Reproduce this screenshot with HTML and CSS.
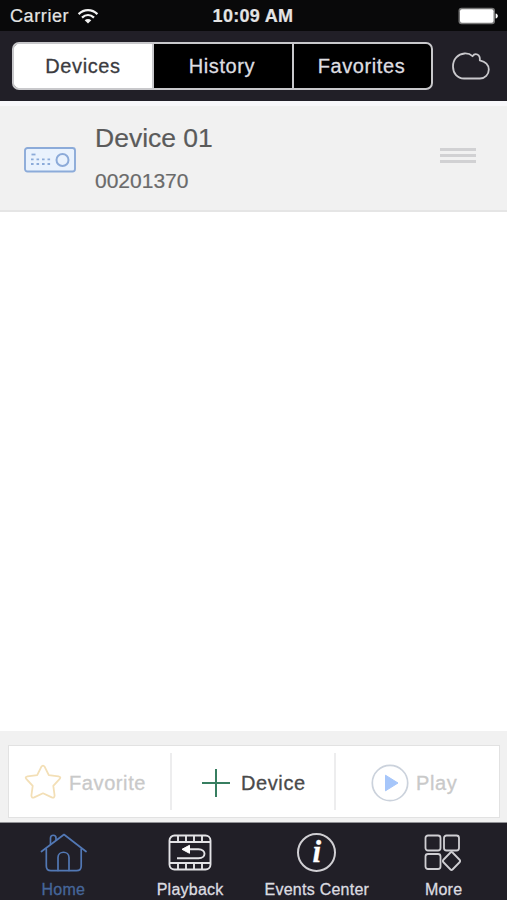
FILE: index.html
```html
<!DOCTYPE html>
<html lang="en">

<head>
    <meta charset="UTF-8">
    <meta name="viewport" content="width=device-width, initial-scale=1.0">
    <title>Devices</title>
    <link rel="stylesheet" href="styles.css">
</head>

<body>
<div class="app">
    <div class="status-bar">
        <div class="carrier">
            <span>Carrier</span>
            <svg width="22" height="17" viewBox="0 0 22 17" fill="none" stroke="#f2f2f2" stroke-width="2.3">
                <path d="M1.6 6.1C7 .9 15 .9 20.4 6.1M5 9.6c3.6-3.4 8.4-3.4 12 0"/>
                <path d="M11 15.6l-3.3-3.3c1.9-1.8 4.7-1.8 6.6 0z" fill="#f2f2f2" stroke="none"/>
            </svg>
        </div>
        <div class="clock">10:09 AM</div>
        <div class="battery">
            <svg width="41" height="18" viewBox="0 0 41 18">
                <rect x=".5" y=".8" width="36.5" height="16.4" rx="3" fill="#777"/>
                <rect x="2" y="2.3" width="33.5" height="13.4" rx="2" fill="#fff"/>
                <path d="M37.6 6.5c3 .6 3 4.4 0 5z" fill="#fff"/>
            </svg>
        </div>
    </div>

    <div class="header">
        <div class="segments">
            <div class="segment active">Devices</div>
            <div class="segment">History</div>
            <div class="segment">Favorites</div>
        </div>
        <svg class="cloud" width="40" height="30" viewBox="0 0 40 30" fill="none" stroke="#c9c8cc" stroke-width="1.8" stroke-linejoin="round">
            <path d="M13 27.500C6.500 27.500 2 22.500 2 15.500C2 8 7 3 13.500 2.500C16.500 2.300 19.500 3.300 21.500 5.200C24 1.500 29.500 3 28.800 9.300C34 10.500 37.800 13.500 37.800 18.500C37.800 23.500 34 27.500 29 27.500Z"/>
        </svg>
    </div>

    <div class="device-row">
        <svg class="device-icon" width="52" height="26" viewBox="0 0 52 26" fill="none" stroke="#8cabd9">
            <rect x="1" y="1" width="50" height="23.500" rx="2.500" fill="#e9f2fd" stroke-width="1.900"/>
            <circle cx="38.500" cy="13" r="6" stroke-width="2"/>
            <path d="M7.500 7.500h4" stroke-width="1.800"/>
            <path d="M7 12.300h20M7 17h20" stroke-width="1.800" stroke-dasharray="2.600 2.900"/>
        </svg>
        <div class="device-info">
            <div class="device-name">Device 01</div>
            <div class="device-id">00201370</div>
        </div>
        <div class="drag-handle">
            <span></span>
            <span></span>
            <span></span>
        </div>
    </div>

    <div class="list-space"></div>

    <div class="actions">
        <div class="action-box">
            <div class="action favorite">
                <svg width="38" height="36" viewBox="0 0 38 36" fill="none" stroke="#f3dfb6" stroke-width="1.800" stroke-linejoin="round">
                    <path d="M17.300 2.800Q19 .4 20.700 2.800L24.800 11.200L34.500 12.300Q37.600 13 35.500 15.200L29.300 21.800L30.600 31.500Q30.500 34.400 27.800 33.400L19 29.300L10.200 33.400Q7.500 34.400 7.400 31.500L8.700 21.800L2.500 15.200Q.4 13 3.500 12.300L13.200 11.200Z"/>
                </svg>
                <span>Favorite</span>
            </div>
            <div class="action add">
                <svg width="28" height="28" viewBox="0 0 28 28" stroke="#377e60" stroke-width="2">
                    <path d="M14 0v28M0 14h28"/>
                </svg>
                <span>Device</span>
            </div>
            <div class="action play">
                <svg width="38" height="38" viewBox="0 0 38 38">
                    <circle cx="19" cy="19" r="17.700" fill="none" stroke="#cbd2dc" stroke-width="1.700"/>
                    <path d="M14.500 11.200L27 19L14.500 26.800z" fill="#a6c6fa" stroke="#a6c6fa" stroke-linejoin="round"/>
                </svg>
                <span>Play</span>
            </div>
        </div>
    </div>

    <div class="tab-bar">
        <div class="tab current">
            <svg width="48" height="40" viewBox="0 0 48 40" fill="none" stroke="#5278b5" stroke-width="1.700" stroke-linejoin="round" stroke-linecap="round">
                <path d="M2.500 18.500L25 1.500L47 18.500"/>
                <path d="M7.300 16V33Q7.300 37.700 12 37.700H37.500Q42.200 37.700 42.200 33V16"/>
                <path d="M19 37.500V24.500C19 17.500 30 17.500 30 24.500V37.500"/>
                <path d="M11.500 11V5C11.500 1.300 17 1.300 17 5V6.500"/>
            </svg>
            <span>Home</span>
        </div>
        <div class="tab">
            <svg width="44" height="40" viewBox="0 0 44 40" fill="none" stroke="#e3e3e6" stroke-width="1.900">
                <rect x="1.500" y="2.500" width="41" height="34" rx="5"/>
                <path d="M1.500 9h41M1.500 30h41M10 2.500v6.500M18 2.500v6.500M26 2.500v6.500M34 2.500v6.500M10 30v6.500M18 30v6.500M26 30v6.500M34 30v6.500"/>
                <path d="M20 16.300H30.500C38.500 16.300 38.500 25.300 30.500 25.300H9"/>
                <path d="M14 16.300L21.500 12.300V20.300z" fill="#fff" stroke="#fff" stroke-width="1"/>
            </svg>
            <span>Playback</span>
        </div>
        <div class="tab">
            <div class="info-icon">i</div>
            <span>Events Center</span>
        </div>
        <div class="tab">
            <svg class="more-icon" width="37" height="40" viewBox="0 0 37 40" fill="none" stroke="#d0cfd3" stroke-width="1.800" stroke-linejoin="round">
                <rect x="1.500" y="2.500" width="15" height="15" rx="2.500"/>
                <rect x="20" y="2.500" width="15" height="15" rx="2.500"/>
                <rect x="1.500" y="21" width="15" height="15" rx="2.500"/>
                <path d="M26.500 19.500Q27.500 18.500 28.500 19.500L35.800 27Q36.500 28 35.800 29L28.500 36.500Q27.500 37.500 26.500 36.500L19.200 29Q18.500 28 19.200 27Z"/>
            </svg>
            <span>More</span>
        </div>
    </div>
</div>
</body>

</html>
```

FILE: styles.css
```css
body {
    margin: 0;
    font-family: "Liberation Sans", Arial, sans-serif;
    background-color: #fff;
}
svg {
    display: block;
    flex: none;
}
.app {
    display: flex;
    flex-direction: column;
    height: 900px;
    width: 507px;
    overflow: hidden;
}
.status-bar {
    display: grid;
    grid-template-columns: 1fr auto 1fr;
    align-items: center;
    height: 31px;
    padding: 1px 8px 0 10px;
    box-sizing: border-box;
    background-color: #09090a;
    color: #e4e4e4;
    font-size: 18px;
    letter-spacing: 0.6px;
    -webkit-text-stroke: 0.2px;
}
.carrier {
    display: flex;
    align-items: center;
    gap: 8px;
}
.clock {
    margin-right: 3px;
    font-weight: bold;
    letter-spacing: 0.3px;
}
.battery {
    justify-self: end;
}
.header {
    display: flex;
    align-items: center;
    height: 70px;
    padding: 0 15px 0 12px;
    box-sizing: border-box;
    background-color: #211f27;
}
.segments {
    display: grid;
    grid-template-columns: 138px 140px 1fr;
    width: 421px;
    height: 48px;
    box-sizing: border-box;
    border: 2px solid #c8c8cb;
    border-radius: 7px;
    overflow: hidden;
    background-color: #000;
}
.segment {
    display: flex;
    align-items: center;
    justify-content: center;
    padding-right: 2px;
    border-left: 2px solid #c8c8cb;
    color: #dedee0;
    font-size: 20px;
    letter-spacing: 0.6px;
    -webkit-text-stroke: 0.3px;
}
.segment.active {
    padding: 0;
    border-left: none;
    background-color: #fff;
    color: #3b3b3f;
    box-shadow: 0 0 0 2px #fff;
}
.cloud {
    margin-left: 18px;
}
.device-row {
    display: flex;
    align-items: center;
    height: 111px;
    padding: 0 31px 0 24px;
    box-sizing: border-box;
    background-color: #f1f1f1;
    border-top: 5px solid #f8f8fb;
    border-bottom: 2px solid #e5e5e5;
}
.device-icon {
    margin-top: 3px;
}
.device-info {
    flex: 1;
    padding-left: 19px;
    -webkit-text-stroke: 0.2px;
}
.device-name {
    font-size: 26.5px;
    line-height: 30px;
    color: #5b5b5b;
}
.device-id {
    margin-top: 16px;
    font-size: 21px;
    line-height: 24px;
    color: #6a6a6a;
}
.drag-handle {
    display: grid;
    gap: 3px;
    width: 36px;
    padding-bottom: 5px;
}
.drag-handle span {
    height: 3px;
    background-color: #d1d1d3;
}
.list-space {
    flex: 1;
}
.actions {
    height: 92px;
    padding: 14px 7px 4px 8px;
    box-sizing: border-box;
    background-color: #f1f1f1;
    border-bottom: 1px solid #929296;
}
.action-box {
    display: grid;
    grid-template-columns: 161px 164px 1fr;
    align-items: center;
    height: 73px;
    box-sizing: border-box;
    border: 1px solid #e2e2e2;
    background-color: #fff;
}
.action {
    display: flex;
    align-items: center;
    height: 57px;
    font-size: 20px;
    letter-spacing: 0.6px;
    -webkit-text-stroke: 0.3px;
}
.action span {
    padding-top: 3px;
}
.action svg {
    margin-top: 2px;
}
.favorite {
    padding-left: 15px;
    gap: 7px;
    color: #c9c9c9;
}
.favorite svg {
    margin-top: 0;
}
.add {
    padding-left: 30px;
    gap: 11px;
    border-left: 2px solid #ededee;
    color: #4a4a4a;
}
.play {
    padding-left: 35px;
    gap: 7px;
    border-left: 2px solid #ededee;
    color: #c9c9c9;
}
.tab-bar {
    display: grid;
    grid-template-columns: repeat(4, 1fr);
    height: 77px;
    background-color: #211f27;
}
.tab {
    display: flex;
    flex-direction: column;
    align-items: center;
    gap: 8px;
    padding-top: 10px;
    color: #dcdce0;
    font-size: 16px;
    line-height: 18px;
    letter-spacing: 0.25px;
    -webkit-text-stroke: 0.3px;
}
.tab.current {
    color: #46669a;
}
.more-icon {
    margin-right: 2px;
}
.info-icon {
    width: 39px;
    height: 39px;
    margin-bottom: 1px;
    box-sizing: border-box;
    border: 2px solid #d0cfd3;
    border-radius: 50%;
    text-align: center;
    font: italic bold 31px/34px "Liberation Serif", serif;
    color: #fff;
}
```
